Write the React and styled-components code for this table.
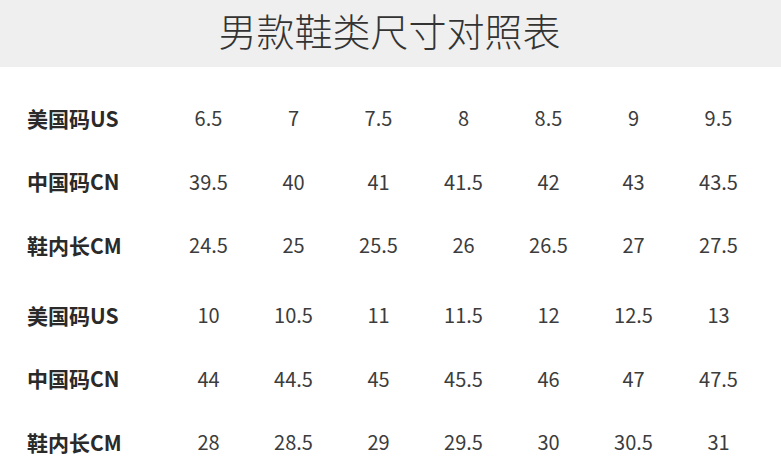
import styled, { createGlobalStyle } from 'styled-components'

const GlobalStyle = createGlobalStyle`
    html, body {
        margin: 0;
        padding: 0;
        background: #ffffff;
    }
    body {
        font-family: "Noto Sans CJK SC", "Noto Sans", sans-serif;
    }
`;

const Page = styled.div`
    width: 781px;
    height: 470px;
    background: #ffffff;
    overflow: hidden;
`;

const Header = styled.div`
    height: 67px;
    background: #efefef;
    display: flex;
    align-items: center;
    justify-content: center;
`;

const Title = styled.h1`
    margin: 0 0 8px 0;
    font-size: 38px;
    font-weight: 300;
    color: #333333;
    line-height: 1;
    padding-right: 2px;
`;

const Tables = styled.div`
    display: flex;
    flex-direction: column;
    gap: 6.5px;
    padding-top: 19px;
`;

const Table = styled.div`
    display: flex;
    flex-direction: column;
`;

const Row = styled.div`
    display: grid;
    grid-template-columns: 139px repeat(7, 85px);
    align-items: center;
    height: 63.5px;
    padding-left: 27px;
`;

const Label = styled.div`
    font-size: 21px;
    font-weight: 700;
    color: #2a2a2a;
    white-space: nowrap;
`;

const Cell = styled.div`
    font-size: 20px;
    font-weight: 400;
    color: #3c3c3c;
    text-align: center;
`;

const tables = [
    [
        { label: '美国码US', values: ['6.5', '7', '7.5', '8', '8.5', '9', '9.5'] },
        { label: '中国码CN', values: ['39.5', '40', '41', '41.5', '42', '43', '43.5'] },
        { label: '鞋内长CM', values: ['24.5', '25', '25.5', '26', '26.5', '27', '27.5'] },
    ],
    [
        { label: '美国码US', values: ['10', '10.5', '11', '11.5', '12', '12.5', '13'] },
        { label: '中国码CN', values: ['44', '44.5', '45', '45.5', '46', '47', '47.5'] },
        { label: '鞋内长CM', values: ['28', '28.5', '29', '29.5', '30', '30.5', '31'] },
    ],
];

const App = () => {
    return (
        <Page>
            <GlobalStyle />
            <Header>
                <Title>男款鞋类尺寸对照表</Title>
            </Header>
            <Tables>
                {tables.map((rows, t) => (
                    <Table key={t}>
                        {rows.map((r) => (
                            <Row key={r.label}>
                                <Label>{r.label}</Label>
                                {r.values.map((v, i) => (
                                    <Cell key={i}>{v}</Cell>
                                ))}
                            </Row>
                        ))}
                    </Table>
                ))}
            </Tables>
        </Page>
    )
}

export default App
